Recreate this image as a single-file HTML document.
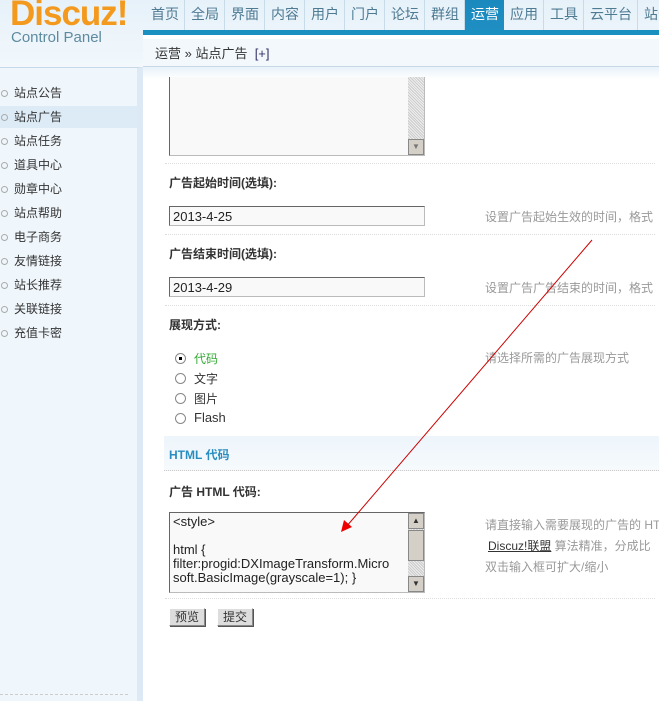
<!DOCTYPE html>
<html><head><meta charset="utf-8"><style>
*{margin:0;padding:0;box-sizing:border-box}
body{width:659px;height:701px;overflow:hidden;background:#fff;font-family:"Liberation Sans","Noto Sans CJK SC",sans-serif;font-size:12px;color:#333;position:relative}
.abs{position:absolute}
#hdr{left:0;top:0;width:659px;height:67px;background:linear-gradient(#e6f1f9,#f2f8fc)}
#logo{left:10px;top:-6px;font:bold 35px "Liberation Sans",sans-serif;color:#f39a1e;letter-spacing:-1px}
#cp{left:11px;top:29px;font-size:15px;color:#5e8aa0}
#nav{left:145px;top:0;height:30px;width:600px;display:flex;white-space:nowrap}
#nav span{flex-shrink:0;font-size:14px;color:#4e7a92;padding:0 5px 0 6px;height:30px;line-height:28px;border-right:1px solid #c8dbe8}
#nav span.on{background:linear-gradient(#1a89bd,#1f8fc3);color:#fff;border-right:none}
#bar{left:143px;top:30px;width:516px;height:5px;background:#1990c0}
#crumb{left:143px;top:35px;width:516px;height:32px;background:#f3f8fc;border-top:4px solid #fff;border-bottom:1px solid #c7d9e6;padding:4px 12px;font-size:13px;color:#333}
#side{left:0;top:67px;width:143px;height:634px;background:#f0f7fc;border-right:6px solid #dde9f4;border-top:1px solid #c7d9e6}
.mi{position:absolute;left:0;width:137px;height:22px;line-height:22px;padding-left:14px;font-size:12px;color:#333}
.mi:before{content:"";position:absolute;left:1px;top:8px;width:5px;height:5px;border:1px solid #aaa;border-radius:50%}
.mi.on{background:#dcebf6}
.ta{background:#f9f9f9;border:1px solid #bbb;border-top-color:#666;border-left-color:#666;font-size:13px;color:#222}
.lbl{font-weight:bold;font-size:12px;color:#333}
.tip{color:#999;font-size:12px;white-space:nowrap}
.dot{border-top:1px dotted #ddd;height:0;width:490px;left:165px}
.rad{left:175px;width:11px;height:11px;border:1px solid #888;border-radius:50%;background:#fff}
.btn{background:#ddd;border:1px solid #888;border-top-color:#fff;border-left-color:#fff;box-shadow:1px 1px 0 #555;font-size:12px;height:18px;line-height:16px;padding:0 5px}
</style></head><body>
<div id="hdr" class="abs"></div>
<div id="logo" class="abs">Discuz!</div>
<div id="cp" class="abs">Control Panel</div>
<div id="nav" class="abs"><span>首页</span><span>全局</span><span>界面</span><span>内容</span><span>用户</span><span>门户</span><span>论坛</span><span>群组</span><span class="on">运营</span><span>应用</span><span>工具</span><span>云平台</span><span>站长</span></div>
<div id="bar" class="abs"></div>
<div id="crumb" class="abs">运营 » 站点广告 &nbsp;<span style="color:#336">[+]</span></div>
<div id="side" class="abs">
<div class="mi" style="top:14px">站点公告</div>
<div class="mi on" style="top:38px">站点广告</div>
<div class="mi" style="top:62px">站点任务</div>
<div class="mi" style="top:86px">道具中心</div>
<div class="mi" style="top:110px">勋章中心</div>
<div class="mi" style="top:134px">站点帮助</div>
<div class="mi" style="top:158px">电子商务</div>
<div class="mi" style="top:182px">友情链接</div>
<div class="mi" style="top:206px">站长推荐</div>
<div class="mi" style="top:230px">关联链接</div>
<div class="mi" style="top:254px">充值卡密</div>
<div class="abs" style="left:0;top:626px;width:128px;border-top:1px dashed #ccc"></div>
</div>
<div class="abs" style="left:143px;top:67px;width:516px;height:12px;background:linear-gradient(#e8f2f9,#fff)"></div>
<div class="abs ta" style="left:169px;top:77px;width:256px;height:79px;border-top:none"></div>
<div class="abs" style="left:408px;top:77px;width:16px;height:78px;background:repeating-linear-gradient(45deg,#ccc 0 1px,#eee 1px 2px)"></div>
<div class="abs" style="left:408px;top:139px;width:16px;height:16px;background:#d4d0c8;border:1px solid #888;font-size:8px;color:#777;text-align:center;line-height:14px">▼</div>
<div class="abs dot" style="top:163px"></div>
<div class="abs lbl" style="left:169px;top:174px">广告起始时间(选填):</div>
<div class="abs ta" style="left:169px;top:206px;width:256px;height:20px;padding:2px 3px">2013-4-25</div>
<div class="abs tip" style="left:485px;top:208px">设置广告起始生效的时间，格式 </div>
<div class="abs dot" style="top:234px"></div>
<div class="abs lbl" style="left:169px;top:245px">广告结束时间(选填):</div>
<div class="abs ta" style="left:169px;top:277px;width:256px;height:20px;padding:2px 3px">2013-4-29</div>
<div class="abs tip" style="left:485px;top:279px">设置广告广告结束的时间，格式 </div>
<div class="abs dot" style="top:305px"></div>
<div class="abs lbl" style="left:169px;top:316px">展现方式:</div>
<div class="abs rad" style="top:353px"><div style="width:3px;height:3px;background:#000;margin:3px"></div></div>
<div class="abs" style="left:194px;top:350px;color:#3a3">代码</div>
<div class="abs rad" style="top:373px"></div><div class="abs" style="left:194px;top:370px">文字</div>
<div class="abs rad" style="top:393px"></div><div class="abs" style="left:194px;top:390px">图片</div>
<div class="abs rad" style="top:413px"></div><div class="abs" style="left:194px;top:410px;font-size:13px">Flash</div>
<div class="abs tip" style="left:485px;top:349px">请选择所需的广告展现方式</div>
<div class="abs" style="left:164px;top:436px;width:495px;height:35px;background:linear-gradient(#edf5fb,#f6fafd);border-bottom:1px dotted #ccc"></div>
<div class="abs" style="left:169px;top:446px;font-weight:bold;color:#2a8dbf">HTML 代码</div>
<div class="abs lbl" style="left:169px;top:483px">广告 HTML 代码:</div>
<div class="abs ta" style="left:169px;top:512px;width:256px;height:81px;padding:2px 3px;line-height:14px;font-size:13px;overflow:hidden;padding-right:20px;word-break:break-all">&lt;style&gt;<br><br>html {<br>filter:progid:DXImageTransform.Micro<br>soft.BasicImage(grayscale=1); }</div>
<div class="abs" style="left:408px;top:513px;width:16px;height:79px;background:repeating-linear-gradient(45deg,#ccc 0 1px,#eee 1px 2px)"></div>
<div class="abs" style="left:408px;top:513px;width:16px;height:16px;background:#d4d0c8;border:1px solid #888;font-size:8px;text-align:center;line-height:14px">▲</div>
<div class="abs" style="left:408px;top:530px;width:16px;height:31px;background:#d4d0c8;border:1px solid #888"></div>
<div class="abs" style="left:408px;top:576px;width:16px;height:16px;background:#d4d0c8;border:1px solid #888;font-size:8px;text-align:center;line-height:14px">▼</div>
<div class="abs tip" style="left:485px;top:516px">请直接输入需要展现的广告的 HT</div>
<div class="abs tip" style="left:488px;top:537px"><span style="color:#333;text-decoration:underline">Discuz!联盟</span> 算法精准，分成比</div>
<div class="abs tip" style="left:485px;top:558px">双击输入框可扩大/缩小</div>
<div class="abs dot" style="top:598px"></div>
<div class="abs btn" style="left:169px;top:608px">预览</div>
<div class="abs btn" style="left:217px;top:608px">提交</div>
<svg class="abs" style="left:0;top:0" width="659" height="701"><line x1="592" y1="240" x2="346" y2="527" stroke="#c00" stroke-width="1"/><polygon points="341,532 344,520 352,527" fill="#e00"/></svg>
</body></html>
